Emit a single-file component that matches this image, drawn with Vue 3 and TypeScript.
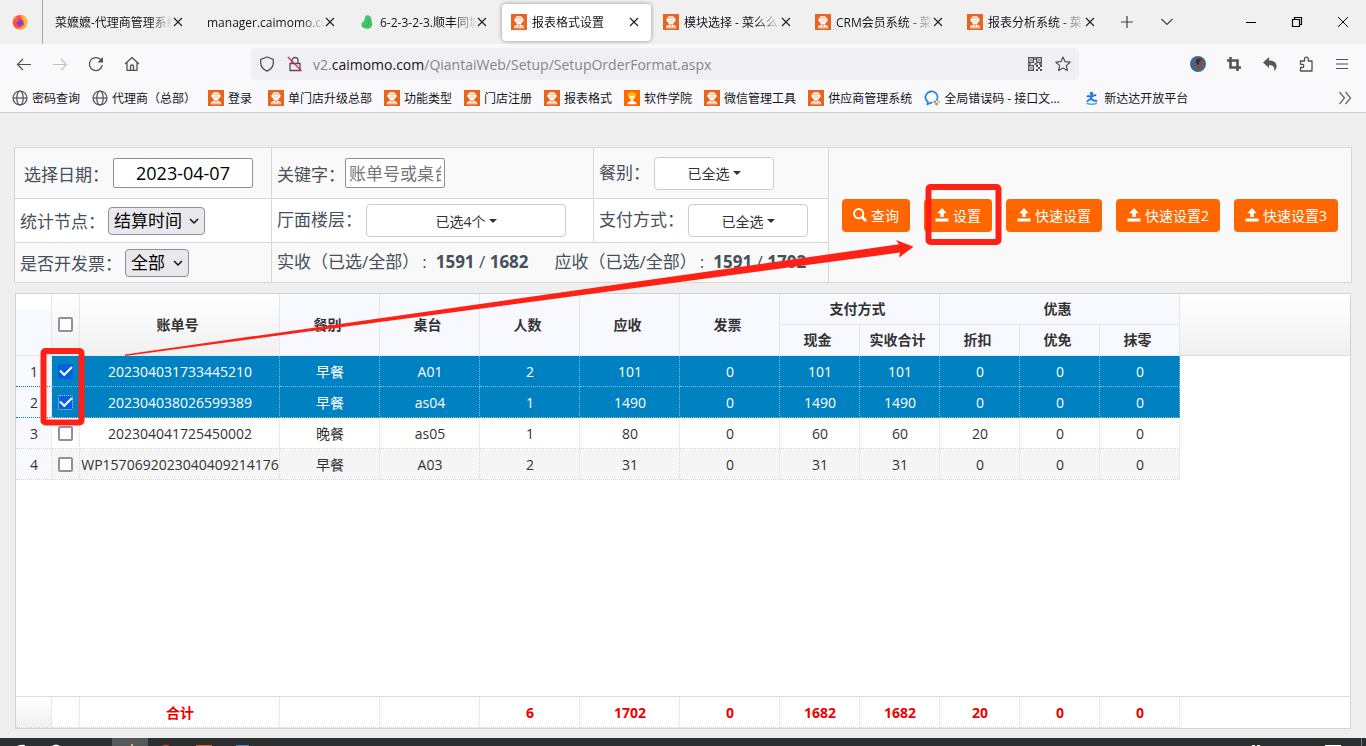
<script setup lang="ts">
import { ref } from 'vue'

interface Tab { title: string; icon?: string; active?: boolean }
interface Bookmark { label: string; icon: string; wide?: boolean }
interface Order { id: string; meal: string; values: (string | number)[]; checked: boolean }

const tabs: Tab[] = [
  { title: '菜嬷嬷-代理商管理系统' },
  { title: 'manager.caimomo.com' },
  { title: '6-2-3-2-3.顺丰同城', icon: 'leaf' },
  { title: '报表格式设置', icon: 'chef', active: true },
  { title: '模块选择 - 菜么么', icon: 'chef' },
  { title: 'CRM会员系统 - 菜么么', icon: 'chef' },
  { title: '报表分析系统 - 菜么么', icon: 'chef' },
]

const bookmarks: Bookmark[] = [
  { label: '密码查询', icon: 'globe' },
  { label: '代理商（总部）', icon: 'globe' },
  { label: '登录', icon: 'chef' },
  { label: '单门店升级总部', icon: 'chef' },
  { label: '功能类型', icon: 'chef' },
  { label: '门店注册', icon: 'chef' },
  { label: '报表格式', icon: 'chef' },
  { label: '软件学院', icon: 'academy' },
  { label: '微信管理工具', icon: 'chef' },
  { label: '供应商管理系统', icon: 'chef' },
  { label: '全局错误码 - 接口文...', icon: 'chat', wide: true },
  { label: '新达达开放平台', icon: 'dada' },
]

const actions = [
  { label: '查询', icon: 'search' },
  { label: '设置', icon: 'upload' },
  { label: '快速设置', icon: 'upload' },
  { label: '快速设置2', icon: 'upload' },
  { label: '快速设置3', icon: 'upload' },
]

const date = ref('2023-04-07')
const keyword = ref('')
const node = ref('结算时间')
const invoice = ref('全部')
const allChecked = ref(false)

const orders = ref<Order[]>([
  { id: '202304031733445210', meal: '早餐', values: ['A01', 2, 101, 0, 101, 101, 0, 0, 0], checked: true },
  { id: '202304038026599389', meal: '早餐', values: ['as04', 1, 1490, 0, 1490, 1490, 0, 0, 0], checked: true },
  { id: '202304041725450002', meal: '晚餐', values: ['as05', 1, 80, 0, 60, 60, 20, 0, 0], checked: false },
  { id: 'WP1570692023040409214176', meal: '早餐', values: ['A03', 2, 31, 0, 31, 31, 0, 0, 0], checked: false },
])

const totals = ['', '', '合计', '', '', '6', '1702', '0', '1682', '1682', '20', '0', '0']
const columns = ['num', 'tick', 'bill', 'mid', 'mid', 'mid', 'mid', 'mid', 'small', 'small', 'small', 'small', 'small']
</script>

<template>
  <div class="screen">
    <svg class="defs" aria-hidden="true">
      <symbol id="chef" viewBox="0 0 16 16">
        <rect width="16" height="16" fill="#e8651f" />
        <path d="M5 8.200C3.200 7.600 2.800 5.300 4.200 4.300 4.800 2.300 6.500 1.900 8 2.300c1.500-.4 3.200 0 3.800 2 1.400 1 1 3.300-.8 3.900-.3 1-.8 1.800-1.600 2.300H6.600C5.800 10 5.300 9.200 5 8.200z" fill="#fff" />
        <path d="M5.200 5.300c.5-1.300 1.600-1.500 2.800-1.200 1.200-.3 2.300-.1 2.800 1.200" fill="none" stroke="#e8651f" stroke-width=".7" />
        <path d="M6 7h4" stroke="#f3a67c" stroke-width=".8" />
        <path d="M6.500 10.500 3.200 12v2.300h9.600V12l-3.300-1.500L8 12z" fill="#fff" />
        <path d="m4.600 12.400 1.500 1.500M6.100 12.400l-1.500 1.500M9.900 12.400l1.500 1.500M11.400 12.400l-1.500 1.500M8 12v2.300" stroke="#e8651f" stroke-width=".7" />
      </symbol>
      <symbol id="academy" viewBox="0 0 16 16">
        <rect width="16" height="16" fill="#ff6a00" />
        <path d="M3.200 4.300 8 1.700l4.800 2.600-1.200.8v1.600c0 1.700-1.600 3.300-3.600 3.300S4.400 8.400 4.400 6.700V5.100z" fill="#ffc21f" />
        <path d="M5.500 6h5c0 1.900-1 3.500-2.500 3.500S5.500 7.900 5.500 6z" fill="#fff3c8" />
        <path d="M7 9.500h2v1.600l3 1.200.7 1.900H3.300l.7-1.900 3-1.200z" fill="#fff" />
      </symbol>
      <symbol id="globe" viewBox="0 0 16 16">
        <g fill="none" stroke="#4f4f58" stroke-width="1.2">
          <circle cx="8" cy="8" r="7" /><ellipse cx="8" cy="8" rx="3.2" ry="7" /><path d="M1 8h14" />
        </g>
      </symbol>
      <symbol id="leaf" viewBox="0 0 16 16">
        <path d="M7 1.500c3-1 5.300.7 5.500 4.200.2 2.800 1.400 4.400.2 6.800-1.400 2.600-6 3-8.500 1.300-2.400-1.700-2.300-4.600-.2-6.100C6.600 6.300 5 3.200 7 1.500z" fill="#45c56b" />
        <path d="M9.500 6c1 3-.6 5.600-3.400 6.300" fill="none" stroke="#37b45c" stroke-width="1.500" />
      </symbol>
      <symbol id="chat" viewBox="0 0 16 16">
        <path d="M8.500 12.600H7.200l-3.700 1.500.2-2.500C1.300 9.600.8 7 2.200 4.600 4.200 1 8.800.5 11.600 2.900c1.700 1.400 2.200 3.100 1.900 5.100" fill="none" stroke="#2584e8" stroke-width="1.800" />
        <circle cx="13" cy="9.500" r="1.200" fill="#2584e8" /><circle cx="14.800" cy="12" r="1.200" fill="#f5b52e" /><circle cx="12.500" cy="14" r="1.300" fill="#f06a3a" /><circle cx="10.800" cy="11.700" r="1.200" fill="#37b36b" />
      </symbol>
      <symbol id="dada" viewBox="0 0 16 16">
        <circle cx="7.500" cy="3.500" r="1.700" fill="#1677e5" />
        <path d="M3.500 6.200h4.300l3.700-1M7.500 6.500 6.800 9 3.500 11M7 8.500l2.500 2 2.700.3" fill="none" stroke="#1677e5" stroke-width="1.900" stroke-linecap="round" />
        <path d="M2.500 13.300c3 1.200 7 1.200 10.500 0" fill="none" stroke="#52a2f2" stroke-width="1.600" />
      </symbol>
      <symbol id="close" viewBox="0 0 10 10"><path d="m1 1 8 8M9 1 1 9" fill="none" stroke="#222" stroke-width="1.200" /></symbol>
      <symbol id="search" viewBox="0 0 14 14"><circle cx="5.700" cy="5.700" r="4.600" fill="none" stroke="#fff" stroke-width="2" /><path d="m9 9 4 4" stroke="#fff" stroke-width="2.800" /></symbol>
      <symbol id="upload" viewBox="0 0 14 14"><path d="M7 0 2.300 5.200h2.900V9h3.600V5.200h2.900zM.5 10.500h13v3H.500z" fill="#fff" /></symbol>
      <symbol id="chevron" viewBox="0 0 12 12"><path d="m2 4 4 4 4-4" fill="none" stroke="#111" stroke-width="1.500" /></symbol>
    </svg>

    <header class="browser">
      <div class="tabbar">
        <div class="pinned">
          <svg class="i16" viewBox="0 0 16 16">
            <circle cx="8" cy="8.300" r="7.300" fill="#ff4f4a" />
            <path d="M9 .5c4 1 7 4.500 6.200 9C14.200 14 9.500 17 4.500 14.500c5 0 8-2.500 7.500-6C11.700 5 8 4 9 .5z" fill="#ffb52e" />
            <path d="M.8 7C1 4.500 2 3 3 2c.2 1.300 1 1.800 2 2z" fill="#ff8a3a" />
            <path d="M4.400 7.500C4.800 4.700 9.200 4.200 10.600 7c1.300 2.700-.6 5-2.900 4.800-2.200-.1-3.600-2.100-3.300-4.300z" fill="#7b3fe0" />
            <path d="M2.500 5.500c2.500-.8 4.500 0 5.500 1.300-2 0-2 1.500-3.500 1.500z" fill="#ff5a3c" />
          </svg>
        </div>
        <nav class="tabs">
          <div v-for="tab in tabs" :key="tab.title" class="tab" :class="{ active: tab.active }">
            <svg v-if="tab.icon" class="i16"><use :href="'#' + tab.icon" /></svg>
            <span class="title">{{ tab.title }}</span>
            <button class="bare" aria-label="关闭"><svg class="i10"><use href="#close" /></svg></button>
          </div>
        </nav>
        <button class="bare tabtool" aria-label="新标签页"><svg class="i14" viewBox="0 0 14 14"><path d="M7 1v12M1 7h12" stroke="#444" stroke-width="1.200" /></svg></button>
        <button class="bare tabtool" aria-label="所有标签页"><svg class="i14" viewBox="0 0 14 14"><path d="m1.500 4 5.500 5.500L12.500 4" fill="none" stroke="#444" stroke-width="1.200" /></svg></button>
        <div class="window">
          <button class="bare" aria-label="最小化"><svg class="i12" viewBox="0 0 12 12"><path d="M1 6.500h10" stroke="#000" /></svg></button>
          <button class="bare" aria-label="还原"><svg class="i12" viewBox="0 0 12 12"><path d="M1.500 3.500h7v7h-7zM3.500 3V1.500h7v7H9" fill="none" stroke="#000" stroke-width="1.200" /></svg></button>
          <button class="bare" aria-label="关闭窗口"><svg class="i12" viewBox="0 0 12 12"><path d="m1 1 10 10M11 1 1 11" stroke="#000" /></svg></button>
        </div>
      </div>

      <div class="toolbar">
        <div class="tools">
          <button class="bare" aria-label="后退"><svg class="i16" viewBox="0 0 16 16"><path d="M15 8.500H1.500M7 3 1.500 8.500 7 14" fill="none" stroke="#4f4f58" stroke-width="1.200" /></svg></button>
          <button class="bare" aria-label="前进"><svg class="i16" viewBox="0 0 16 16"><path d="M1 8.500h13.500M9 3l5.500 5.500L9 14" fill="none" stroke="#c0c0c4" stroke-width="1.200" /></svg></button>
          <button class="bare" aria-label="刷新"><svg class="i16" viewBox="0 0 16 16"><path d="M14.300 9A6.500 6.500 0 1 1 12.500 3.500L14 5" fill="none" stroke="#4f4f58" stroke-width="1.300" /><path d="M15 1v5.500H9.500z" fill="#4f4f58" /></svg></button>
          <button class="bare" aria-label="主页"><svg class="i16" viewBox="0 0 16 16"><path d="m1 8 7-6.500L15 8M3 7v7.300h10V7M6.500 14V10.500a1.500 1.500 0 0 1 3 0V14" fill="none" stroke="#4f4f58" stroke-width="1.300" stroke-linejoin="round" /></svg></button>
        </div>
        <div class="urlbar">
          <svg class="i16" viewBox="0 0 16 16"><path d="M8 1 14.300 3.300v3.500c0 4-2.500 6.700-6.300 8.400C4.200 13.500 1.700 10.800 1.700 6.800V3.300z" fill="none" stroke="#4f4f58" stroke-width="1.300" stroke-linejoin="round" /></svg>
          <svg class="i16" viewBox="0 0 16 16"><path d="M3 7.500h10v7H3zM5 7V4.500a3 3 0 0 1 6 0V7" fill="none" stroke="#4f4f58" stroke-width="1.300" /><path d="m1 1 13.500 14" stroke="#e22850" stroke-width="1.300" /></svg>
          <span class="url">v2.<b>caimomo.com</b>/QiantaiWeb/Setup/SetupOrderFormat.aspx</span>
          <svg class="i16" viewBox="0 0 16 16"><path d="M1.700 1.700h4.600v4.600H1.700zM9.700 1.700h4.600v4.600H9.700zM1.700 9.700h4.600v4.600H1.700z" fill="none" stroke="#4f4f58" stroke-width="1.300" /><path d="M3.300 3.300h1.400v1.400H3.300zM11.300 3.300h1.400v1.400h-1.400zM3.300 11.300h1.400v1.400H3.300zM9 9h2v2H9zM13 9h2v2h-2zM11 11h2v2h-2zM9 13h2v2H9zM13 13h2v2h-2zM7.300 1h1.400v3H7.300zM7.300 7.300h3v1.400h-3zM12 7.300h3v1.400h-3zM1 7.300h3v1.400H1z" fill="#4f4f58" /></svg>
          <svg class="i16" viewBox="0 0 16 16"><path d="m8 1 2.100 4.700 5 .5-3.800 3.400 1.100 5L8 12l-4.400 2.600 1.100-5L.9 6.200l5-.5z" fill="none" stroke="#4f4f58" stroke-width="1.200" stroke-linejoin="round" /></svg>
        </div>
        <div class="tools">
          <button class="bare" aria-label="账户"><svg class="i16" viewBox="0 0 16 16"><circle cx="8" cy="8" r="8" fill="#43688c" /><path d="M7 4c2-2 5.500-.5 5.500 2.500 0 3-1 5-3.500 6.500l-2 1c1-2-.5-3-.5-5z" fill="#8f4a35" /><path d="M5.500 5c1-3 5.500-3.500 6.500-1-2 0-3 1.500-3 3.500L7.500 9z" fill="#3a2d35" /></svg></button>
          <button class="bare" aria-label="截图"><svg class="i16" viewBox="0 0 16 16"><path d="M4.500 1v10.500H15M1 4.500h10.500V15" fill="none" stroke="#55555c" stroke-width="2.600" /></svg></button>
          <button class="bare" aria-label="撤销"><svg class="i16" viewBox="0 0 16 16"><path d="M1 6.500 7 1v3.500c5 0 8 2.500 7.500 6.500-.2 1.600-1 3-2.500 4 1-3.500-.5-6-5-6V12z" fill="#55555c" /></svg></button>
          <button class="bare" aria-label="扩展"><svg class="i16" viewBox="0 0 16 16"><path d="M2.500 5h4V3a1.900 1.900 0 0 1 3.800 0v2H14v10H2.500v-3.500h1.700a1.600 1.600 0 0 0 0-3.200H2.500z" fill="none" stroke="#4f4f58" stroke-width="1.300" stroke-linejoin="round" /></svg></button>
          <button class="bare" aria-label="菜单"><svg class="i16" viewBox="0 0 16 16"><path d="M2 3.500h12M2 8h12M2 12.500h12" stroke="#4f4f58" stroke-width="1.200" /></svg></button>
        </div>
      </div>

      <nav class="bookmarks">
        <a v-for="mark in bookmarks" :key="mark.label" href="#">
          <svg class="i16"><use :href="'#' + mark.icon" /></svg>
          <span :class="{ wide: mark.wide }">{{ mark.label }}</span>
        </a>
        <button class="bare more" aria-label="更多书签"><svg class="i14" viewBox="0 0 14 14"><path d="m1.500 1 5 6-5 6M7.500 1l5 6-5 6" fill="none" stroke="#66666c" stroke-width="1.300" /></svg></button>
      </nav>
    </header>

    <main class="page">
      <form class="filters" @submit.prevent>
        <div class="cell first"><label for="date">选择日期：</label><input id="date" v-model="date" class="date" type="text" /></div>
        <div class="cell"><label for="keyword">关键字：</label><input id="keyword" v-model="keyword" class="keyword" type="text" placeholder="账单号或桌台" /></div>
        <div class="cell"><span class="raised">餐别：</span><button class="drop" type="button">已全选<i class="caret"></i></button></div>
        <div class="cell actions">
          <button v-for="action in actions" :key="action.label" class="action" type="button">
            <svg class="i14"><use :href="'#' + action.icon" /></svg>{{ action.label }}
          </button>
        </div>
        <div class="cell alt">
          <label for="node">统计节点：</label>
          <span class="pick node"><select id="node" v-model="node"><option>结算时间</option></select><svg class="i12"><use href="#chevron" /></svg></span>
        </div>
        <div class="cell alt"><span class="raised">厅面楼层：</span><button class="drop floor" type="button">已选4个<i class="caret"></i></button></div>
        <div class="cell alt"><span class="raised">支付方式：</span><button class="drop" type="button">已全选<i class="caret"></i></button></div>
        <div class="cell">
          <label for="invoice">是否开发票：</label>
          <span class="pick invoice"><select id="invoice" v-model="invoice"><option>全部</option></select><svg class="i12"><use href="#chevron" /></svg></span>
        </div>
        <div class="cell sums">
          <span>实收（已选/全部）<i class="colon">:</i><b>1591</b> / <b>1682</b></span>
          <span>应收（已选/全部）<i class="colon">:</i><b>1591</b> / <b>1702</b></span>
        </div>
      </form>

      <section class="grid">
        <div class="head">
          <table>
            <colgroup><col v-for="(c, i) in columns" :key="i" :class="c" /></colgroup>
            <thead>
              <tr>
                <th rowspan="2" class="corner"></th>
                <th rowspan="2" class="shade all"><input v-model="allChecked" type="checkbox" aria-label="全选" /></th>
                <th rowspan="2" class="shade">账单号</th>
                <th rowspan="2">餐别</th>
                <th rowspan="2">桌台</th>
                <th rowspan="2">人数</th>
                <th rowspan="2">应收</th>
                <th rowspan="2">发票</th>
                <th colspan="2">支付方式</th>
                <th colspan="3">优惠</th>
              </tr>
              <tr><th>现金</th><th>实收合计</th><th>折扣</th><th>优免</th><th>抹零</th></tr>
            </thead>
          </table>
        </div>
        <div class="body">
          <table>
            <colgroup><col v-for="(c, i) in columns" :key="i" :class="c" /></colgroup>
            <tbody>
              <tr v-for="(order, i) in orders" :key="order.id" :class="{ selected: order.checked }">
                <td class="index">{{ i + 1 }}</td>
                <td class="box"><input v-model="order.checked" type="checkbox" :class="{ focused: i === 1 }" :aria-label="order.id" /></td>
                <td>{{ order.id }}</td>
                <td>{{ order.meal }}</td>
                <td v-for="(value, v) in order.values" :key="v">{{ value }}</td>
              </tr>
            </tbody>
          </table>
        </div>
        <div class="foot">
          <table>
            <colgroup><col v-for="(c, i) in columns" :key="i" :class="c" /></colgroup>
            <tbody><tr><td v-for="(total, i) in totals" :key="i">{{ total }}</td></tr></tbody>
          </table>
        </div>
      </section>
    </main>

    <footer class="taskbar">
      <svg width="260" height="8" viewBox="0 0 260 8">
        <path d="M112 0h36v8h-36z" fill="#55575a" />
        <path d="M17 8q5-2 8-1v1zM52 8q4-3 8 0z" fill="#fff" />
        <path d="M131 6h2v2h-2z" fill="#d8b84a" /><path d="M162 8q4-3 8 0z" fill="#d8392b" />
        <path d="M196 7h16v1h-16z" fill="#e8651f" /><path d="M236 7h13v1h-13z" fill="#4a90d0" />
      </svg>
      <svg width="120" height="8" viewBox="0 0 120 8">
        <path d="M6 7h3v1H6zM11 7h3v1h-3zM79 7h16v1H79z" fill="#fff" /><path d="M115 0h1v8h-1z" fill="#77797c" />
      </svg>
    </footer>

    <svg class="marks" width="1010" height="440" viewBox="0 0 1010 440" aria-hidden="true">
      <g fill="none" stroke="#ff2116" stroke-width="6">
        <rect x="43.500" y="351" width="38" height="71.500" rx="2" />
        <rect x="928.500" y="187" width="70" height="55" rx="2" />
      </g>
      <path d="M125 354.500 899 244.300 896 240 913.500 246.800 899 257.500 900 252.600 125 356z" fill="#ff2116" />
    </svg>
  </div>
</template>

<style>
body {
  margin: 0;
}
</style>

<style scoped>
* {
  box-sizing: border-box;
}
.screen {
  position: relative;
  display: flex;
  flex-direction: column;
  min-height: 100vh;
  background: #efefef;
  font-family: "Open Sans", "Noto Sans CJK SC", sans-serif;
  font-size: 14px;
  color: #333;
}
.defs {
  position: absolute;
  width: 0;
  height: 0;
}
svg {
  display: block;
  flex: none;
}
.i10 { width: 10px; height: 10px; }
.i12 { width: 12px; height: 12px; }
.i14 { width: 14px; height: 14px; }
.i16 { width: 16px; height: 16px; }
button, input, select {
  font: inherit;
  margin: 0;
}
.bare {
  display: block;
  padding: 0;
  border: 0;
  background: none;
}
.browser {
  background: #f9f9fb;
  border-bottom: 1px solid #cccccf;
  font-size: 12px;
  color: #15141a;
}
.tabbar {
  display: flex;
  align-items: center;
  height: 44px;
  background: #f0f0f0;
}
.pinned {
  display: flex;
  align-items: center;
  width: 43px;
  height: 44px;
  padding-left: 12px;
  border-right: 1px solid #aaa;
}
.tabs {
  display: flex;
  gap: 3px;
  margin-left: 3px;
}
.tab {
  display: flex;
  align-items: center;
  width: 149px;
  height: 37px;
  padding: 0 12px 0 9px;
  border-radius: 4px;
}
.tab.active {
  background: #fff;
  box-shadow: 0 0 4px rgba(0, 0, 0, 0.4);
}
.tab .i16 {
  margin-right: 5px;
}
.title {
  flex: 1;
  overflow: hidden;
  white-space: nowrap;
  mask-image: linear-gradient(to left, transparent, #000 24px);
}
.tabtool {
  margin-left: 13px;
}
.tabtool + .tabtool {
  margin-left: 26px;
}
.window {
  display: flex;
  gap: 34px;
  margin-left: auto;
  padding-right: 17px;
}
.toolbar {
  display: flex;
  align-items: center;
  height: 40px;
  padding: 0 16px;
}
.tools {
  display: flex;
  gap: 20px;
}
.urlbar {
  display: flex;
  flex: 1;
  align-items: center;
  gap: 12px;
  height: 32px;
  margin: 0 111px;
  padding: 0 8px;
  border-radius: 4px;
  background: #f0f0f4;
}
.url {
  flex: 1;
  margin-left: -2px;
  font-size: 14px;
  color: #85858b;
}
.url b {
  font-weight: 400;
  color: #15141a;
}
.bookmarks {
  display: flex;
  align-items: center;
  gap: 12px;
  height: 28px;
  padding: 0 14px 0 12px;
}
.bookmarks a {
  display: flex;
  align-items: center;
  gap: 4px;
  color: inherit;
  text-decoration: none;
  white-space: nowrap;
}
.bookmarks span {
  min-width: 28px;
}
.bookmarks .wide {
  min-width: 128px;
}
.more {
  margin-left: auto;
}
.page {
  display: flex;
  flex: 1;
  flex-direction: column;
  gap: 10px;
  padding: 34px 14px 9px;
}
.filters {
  display: grid;
  grid-template-columns: 257px 322px 235px 1fr;
  grid-template-rows: 51px 44px 40px;
  border: solid #d8d8d8;
  border-width: 1px 0 0 1px;
  font-size: 17px;
  color: #46505b;
}
.cell {
  display: flex;
  align-items: center;
  padding-left: 5px;
  border: solid #d8d8d8;
  border-width: 0 1px 1px 0;
  background: #f9f9f9;
  white-space: nowrap;
}
.cell.first {
  padding-left: 9px;
}
.cell.alt {
  background: #fff;
}
.cell.actions {
  grid-column: 4;
  grid-row: 1 / 4;
  gap: 14px;
  padding-left: 13px;
}
.cell.sums {
  grid-column: 2 / 4;
  gap: 26px;
  padding-bottom: 4px;
}
.colon {
  margin: 0 9px 0 3px;
  font-style: normal;
}
.raised {
  padding-bottom: 4px;
}
.date, .keyword {
  height: 30px;
  border: 1px solid #8f8f9d;
  border-radius: 2px;
  background: #fff;
  color: #000;
}
.date {
  width: 140px;
  margin-left: 4px;
  padding: 0;
  font-size: 18px;
  text-align: center;
}
.keyword {
  width: 100px;
  padding: 0 3px;
}
.keyword::placeholder {
  color: #757575;
}
.pick {
  display: grid;
  align-items: center;
  margin-left: 3px;
}
.pick.node { width: 97px; }
.pick.invoice { width: 64px; }
.pick select, .pick svg {
  grid-area: 1 / 1;
}
.pick select {
  appearance: none;
  height: 28px;
  padding: 0 5px;
  border: 1px solid #8f8f9d;
  border-radius: 4px;
  background: #e9e9ed;
  color: #000;
}
.pick svg {
  justify-self: end;
  margin-right: 5px;
  pointer-events: none;
}
.drop {
  display: flex;
  align-items: center;
  justify-content: center;
  gap: 3px;
  width: 120px;
  height: 33px;
  margin-left: 4px;
  border: 1px solid #ccc;
  border-radius: 4px;
  background: #fff;
  font-size: 14px;
  color: #333;
}
.drop.floor {
  width: 200px;
}
.caret {
  border: 4px solid transparent;
  border-top-color: #333;
  border-bottom: 0;
}
.action {
  display: flex;
  align-items: center;
  gap: 4px;
  height: 33px;
  padding: 0 11px;
  border: 0;
  border-radius: 4px;
  background: #ff6600;
  font-size: 14px;
  color: #fff;
}
.grid {
  display: flex;
  flex: 1;
  flex-direction: column;
  margin: 0 1px;
  border: 1px solid #d3d3d3;
  background: #fff;
}
.head {
  background: linear-gradient(#fff, #f0f0f0);
  box-shadow: inset 0 -1px #ddd;
}
.body {
  flex: 1;
}
.foot {
  border-top: 1px solid #ddd;
}
table {
  width: 1164px;
  table-layout: fixed;
  border-collapse: separate;
  border-spacing: 0;
}
.num { width: 36px; }
.tick { width: 28px; }
.bill { width: 200px; }
.mid { width: 100px; }
.small { width: 80px; }
th, td {
  height: 31px;
  border: dotted #d8d8d8;
  border-width: 0 1px 1px 0;
  text-align: center;
  line-height: 20px;
  white-space: nowrap;
}
td {
  padding: 2px 0 0 1px;
}
td.box {
  padding: 0;
}
th {
  padding: 0 4px 0 0;
  border-style: solid;
  border-color: #e4e6ea;
  background: #f8f9ff;
}
th.shade {
  background: none;
}
th.all {
  padding: 0;
}
th.corner {
  background: linear-gradient(#fff 16px, #f8f9ff 16px);
}
tr:nth-child(even) td {
  background: #f5f5f5;
}
.body td.index, .body tr:nth-child(even) td.index {
  background: #f8f9ff;
  color: #333;
}
.body .selected td, .body .selected:nth-child(even) td {
  background: #0081c2;
  color: #fff;
  border-color: #7fc0e0;
}
.body .selected td.index, .body .selected:nth-child(even) td.index {
  background: #f8f9ff;
  color: #333;
  border-color: #0081c2;
  border-right-color: #d8d8d8;
}
.foot td {
  font-weight: 700;
  color: #f00000;
}
.foot td:first-child {
  background: linear-gradient(#fff, #f0f0f0);
}
input[type="checkbox"] {
  display: grid;
  place-items: center;
  appearance: none;
  width: 15px;
  height: 15px;
  margin: 0 auto;
  border: 2px solid #8f8f9d;
  border-radius: 2px;
  background: #fff;
}
input[type="checkbox"]:checked {
  border-color: #0060df;
  background: #0060df;
}
input[type="checkbox"]:checked::before {
  content: "";
  width: 10px;
  height: 5px;
  margin-bottom: 3px;
  border: solid #fff;
  border-width: 0 0 2px 2px;
  transform: rotate(-45deg);
}
input[type="checkbox"].focused {
  outline: 1px dotted #b8dcff;
  outline-offset: -1px;
}
.taskbar {
  display: flex;
  justify-content: space-between;
  height: 8px;
  background: #2d2e30;
}
.marks {
  position: absolute;
  top: 0;
  left: 0;
  pointer-events: none;
}
</style>
